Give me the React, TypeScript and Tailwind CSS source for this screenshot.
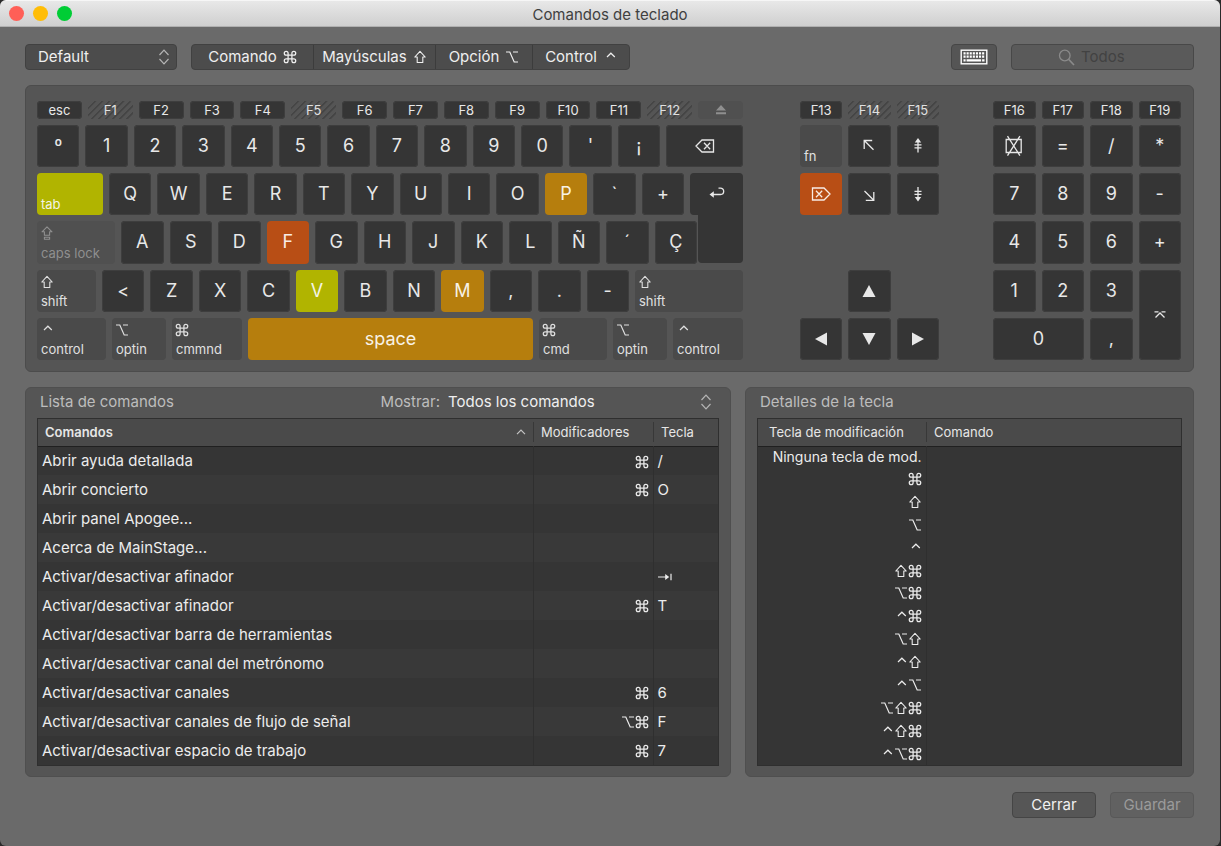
import { useState } from 'react'
import type { ReactNode } from 'react'
import clsx from 'clsx'

type Tone = 'dark' | 'modifier' | 'disabled' | 'yellow' | 'amber' | 'orange' | 'hatched'

const tones: Record<Tone, string> = {
  dark: 'bg-[#353535] text-[#e8e8e8] ring-1 ring-inset ring-[#3e3e3e]',
  modifier: 'bg-[#4a4a4a] text-[#e0e0e0]',
  disabled: 'bg-[#505050] text-[#8f8f8f]',
  yellow: 'bg-[#b1b400] text-[#f4f4e6]',
  amber: 'bg-[#b67e0d] text-[#f8f2e6]',
  orange: 'bg-[#b84e15] text-[#f8ece6]',
  hatched:
    'bg-[repeating-linear-gradient(-45deg,#555555_0px,#555555_3px,#454545_4px,#454545_5px)] text-[#e0e0e0]',
}

/* ---------- symbols ---------- */

type Mod = 'cmd' | 'shift' | 'opt' | 'ctrl' | 'caps'

const modNames: Record<Mod, string> = {
  cmd: 'Comando',
  shift: 'Mayúsculas',
  opt: 'Opción',
  ctrl: 'Control',
  caps: 'Bloqueo de mayúsculas',
}

function ModIcon({ mod }: { mod: Mod }) {
  const common = {
    width: 14,
    height: 14,
    fill: 'none',
    stroke: 'currentColor',
    role: 'img',
    'aria-label': modNames[mod],
    className: 'shrink-0',
  }
  if (mod === 'cmd')
    return (
      <svg viewBox="1 1 22 22" strokeWidth="2" {...common}>
        <path d="M15 6v12a3 3 0 1 0 3-3H6a3 3 0 1 0 3 3V6a3 3 0 1 0-3 3h12a3 3 0 1 0-3-3" />
      </svg>
    )
  if (mod === 'shift')
    return (
      <svg viewBox="0 0 14 14" strokeWidth="1.1" strokeLinejoin="round" {...common}>
        <path d="M7 1.3 12.2 7H9.8v5.5H4.2V7H1.8Z" />
      </svg>
    )
  if (mod === 'caps')
    return (
      <svg viewBox="0 0 14 14" strokeWidth="1.1" strokeLinejoin="round" {...common}>
        <path d="M7 .8 12 5.8H9.6v3.5H4.4V5.8H2ZM4.4 11.2h5.2v2H4.4Z" />
      </svg>
    )
  if (mod === 'opt')
    return (
      <svg viewBox="0 0 14 14" strokeWidth="1.2" {...common}>
        <path d="M1 2h3.8l4.4 10H13M8 2h5" />
      </svg>
    )
  return (
    <svg viewBox="0 0 14 14" strokeWidth="1.2" {...common}>
      <path d="M4 7 7.9 3.2 11.8 7" />
    </svg>
  )
}

function Mods({ keys }: { keys: Mod[] }) {
  return (
    <span className="inline-flex items-center align-middle">
      {keys.map((k) => (
        <ModIcon key={k} mod={k} />
      ))}
    </span>
  )
}

function UpDown() {
  return (
    <svg
      width="12"
      height="16"
      viewBox="0 0 12 16"
      fill="none"
      stroke="#b4b4b4"
      strokeWidth="1.2"
      className="pointer-events-none absolute top-1/2 right-[7px] -translate-y-1/2"
      aria-hidden="true"
    >
      <path d="M1.5 6 6 1.2 10.5 6M1.5 10 6 14.8 10.5 10" />
    </svg>
  )
}

function Glyph({ d, w = 20, h = 20, fill = false }: { d: string; w?: number; h?: number; fill?: boolean }) {
  return (
    <svg
      width={w}
      height={h}
      viewBox={`0 0 ${w} ${h}`}
      fill={fill ? 'currentColor' : 'none'}
      stroke={fill ? 'none' : 'currentColor'}
      strokeWidth="1.3"
      aria-hidden="true"
    >
      <path d={d} />
    </svg>
  )
}

const backspace = <Glyph d="M7 4h11.5v12H7L1 10ZM9 6.8l6.2 6.4M15.2 6.8 9 13.2" />
const forwardDelete = <Glyph d="M1.5 4H13l6 6-6 6H1.5ZM5 6.8l6.2 6.4M11.2 6.8 5 13.2" />
const home = <Glyph d="M5.2 13V4.5h8M5.5 4.8l9 9" />
const end = <Glyph d="M14.8 8v8.3h-8M14.5 16l-9-9" />
const pageUp = (
  <svg width="20" height="20" viewBox="0 0 20 20" stroke="currentColor" strokeWidth="1.3" fill="currentColor" aria-hidden="true">
    <path d="M10 6v10.5M6.5 8.8h7M6.5 11.8h7" fill="none" />
    <path d="M10 2 13.2 6.4H6.8Z" stroke="none" />
  </svg>
)
const pageDown = (
  <svg width="20" height="20" viewBox="0 0 20 20" stroke="currentColor" strokeWidth="1.3" fill="currentColor" aria-hidden="true">
    <path d="M10 3v10.5M6.5 7.4h7M6.5 10.4h7" fill="none" />
    <path d="M10 17.4 13.2 13H6.8Z" stroke="none" />
  </svg>
)
const clear = <Glyph h={22} d="M2.2 4.5h15v13h-15ZM3.5 1.2l12.4 19.4M15.9 1.2 3.5 20.6" />
const numEnter = <Glyph d="M4.5 6.8h4M11.5 6.8h4M5.5 12.5 10 8l4.5 4.5" />
const eject = <Glyph fill w={12} h={10} d="M6 0 11 5.5H1ZM1 7.200h10v2H1Z" />
const returnArrow = (
  <svg width="20" height="20" viewBox="0 0 20 20" fill="none" stroke="currentColor" strokeWidth="1.3" aria-hidden="true">
    <path d="M4 10.500h9.500a3.200 3.200 0 0 0 0-6.400H11.500" />
    <path d="M2.500 10.500 6.800 7.300v6.400Z" fill="currentColor" stroke="none" />
  </svg>
)
const arrowUp = <Glyph fill w={14} h={14} d="M7 1 13.500 13H.5Z" />
const arrowDown = <Glyph fill w={14} h={14} d="M7 13 .5 1h13Z" />
const arrowLeft = <Glyph fill w={14} h={14} d="M1 7 13 .5v13Z" />
const arrowRight = <Glyph fill w={14} h={14} d="M13 7 1 .5v13Z" />
const tabArrow = (
  <svg width="14" height="8" viewBox="0 0 14 8" fill="none" stroke="currentColor" strokeWidth="1.2" role="img" aria-label="Tabulador">
    <path d="M0 4h8M13 .8v6.400" />
    <path d="M11.200 4 7.200 1v6Z" fill="currentColor" stroke="none" />
  </svg>
)

/* ---------- keys ---------- */

function Key({
  children,
  tone = 'dark',
  size = 'flex-1',
  label,
}: {
  children: ReactNode
  tone?: Tone
  size?: string
  label?: string
}) {
  return (
    <button
      type="button"
      aria-label={label}
      className={clsx('flex min-w-0 items-center justify-center rounded-[4px] text-[18px] leading-none', size, tones[tone])}
    >
      {children}
    </button>
  )
}

function FKey({ name }: { name: string }) {
  const hatched = ['F1', 'F5', 'F12', 'F14', 'F15'].includes(name)
  return (
    <button
      type="button"
      aria-label={name === 'eject' ? 'Expulsar' : undefined}
      className={clsx(
        'flex min-w-0 flex-1 items-center justify-center rounded-[4px] text-[13px] leading-none',
        tones[name === 'eject' ? 'disabled' : hatched ? 'hatched' : 'dark'],
      )}
    >
      {name === 'eject' ? eject : name}
    </button>
  )
}

function ModKey({ text, mod, size, tone = 'modifier' }: { text: string; mod?: Mod; size: string; tone?: Tone }) {
  return (
    <button
      type="button"
      className={clsx(
        'flex min-w-0 flex-col items-start justify-between rounded-[4px] px-[3px] pt-[5px] pb-[3px] text-[13px] leading-4',
        size,
        tones[tone],
      )}
    >
      {mod ? <ModIcon mod={mod} /> : <span />}
      <span className="pl-px">{text}</span>
    </button>
  )
}

const keyTones: Record<string, Tone> = { P: 'amber', F: 'orange', V: 'yellow', M: 'amber' }

function Letters({ keys }: { keys: string[] }) {
  return (
    <>
      {keys.map((k) => (
        <Key key={k} tone={keyTones[k] ?? 'dark'}>
          {k}
        </Key>
      ))}
    </>
  )
}

const rowClass = 'flex gap-[6px]'
const fRowClass = 'flex h-[18px] gap-[6px]'
const mainF = ['esc', 'F1', 'F2', 'F3', 'F4', 'F5', 'F6', 'F7', 'F8', 'F9', 'F10', 'F11', 'F12', 'eject']

function Keyboard() {
  return (
    <section
      aria-label="Teclado"
      className="mt-[15px] flex rounded-[6px] border border-[#4c4c4c] bg-[#555555] pt-[15px] pr-3 pb-[11px] pl-[11px]"
    >
      <div className="flex min-w-0 flex-[706_1_0%] flex-col gap-[6px]">
        <div className={fRowClass}>
          {mainF.map((f) => (
            <FKey key={f} name={f} />
          ))}
        </div>
        <div className="grid h-[235px] grid-rows-5 gap-[6px]">
          <div className={rowClass}>
            <Letters keys={['º', '1', '2', '3', '4', '5', '6', '7', '8', '9', '0', "'", '¡']} />
            <Key size="w-[77px]" label="Retroceso">
              {backspace}
            </Key>
          </div>
          <div className={rowClass}>
            <ModKey text="tab" tone="yellow" size="w-[66px]" />
            <Letters keys={['Q', 'W', 'E', 'R', 'T', 'Y', 'U', 'I', 'O', 'P', '`', '+']} />
            <button
              type="button"
              aria-label="Retorno"
              className="relative flex w-[53px] items-center justify-center rounded-[4px] rounded-br-none bg-[#353535] text-[#e8e8e8]"
            >
              {returnArrow}
              <span className="absolute top-full right-0 h-[48px] w-[45px] rounded-b-[4px] bg-[#353535]" />
            </button>
          </div>
          <div className={rowClass}>
            <ModKey text="caps lock" mod="caps" tone="disabled" size="w-[78px]" />
            <Letters keys={['A', 'S', 'D', 'F', 'G', 'H', 'J', 'K', 'L', 'Ñ', '´', 'Ç']} />
            <span className="w-[40px]" />
          </div>
          <div className={rowClass}>
            <ModKey text="shift" mod="shift" size="w-[59px]" />
            <Letters keys={['<', 'Z', 'X', 'C', 'V', 'B', 'N', 'M', ',', '.', '-']} />
            <ModKey text="shift" mod="shift" size="w-[108px]" />
          </div>
          <div className={rowClass}>
            <ModKey text="control" mod="ctrl" size="w-[69px]" />
            <ModKey text="optin" mod="opt" size="w-[54px]" />
            <ModKey text="cmmnd" mod="cmd" size="w-[70px]" />
            <Key tone="amber">space</Key>
            <ModKey text="cmd" mod="cmd" size="w-[68px]" />
            <ModKey text="optin" mod="opt" size="w-[54px]" />
            <ModKey text="control" mod="ctrl" size="w-[70px]" />
          </div>
        </div>
      </div>

      <div className="ml-[57px] flex min-w-0 flex-[139_1_0%] flex-col gap-[6px]">
        <div className={fRowClass}>
          {['F13', 'F14', 'F15'].map((f) => (
            <FKey key={f} name={f} />
          ))}
        </div>
        <div className="grid h-[235px] grid-cols-3 grid-rows-5 gap-[6px]">
          <ModKey text="fn" size="" />
          <Key size="" label="Inicio">{home}</Key>
          <Key size="" label="Página arriba">{pageUp}</Key>
          <Key size="" tone="orange" label="Suprimir">{forwardDelete}</Key>
          <Key size="" label="Fin">{end}</Key>
          <Key size="" label="Página abajo">{pageDown}</Key>
          <Key size="col-start-2 row-start-4" label="Flecha arriba">{arrowUp}</Key>
          <Key size="col-start-1 row-start-5" label="Flecha izquierda">{arrowLeft}</Key>
          <Key size="col-start-2 row-start-5" label="Flecha abajo">{arrowDown}</Key>
          <Key size="col-start-3 row-start-5" label="Flecha derecha">{arrowRight}</Key>
        </div>
      </div>

      <div className="ml-[54px] flex min-w-0 flex-[188_1_0%] flex-col gap-[6px]">
        <div className={fRowClass}>
          {['F16', 'F17', 'F18', 'F19'].map((f) => (
            <FKey key={f} name={f} />
          ))}
        </div>
        <div className="grid h-[235px] grid-cols-4 grid-rows-5 gap-[6px]">
          <Key size="" label="Borrar">{clear}</Key>
          {['=', '/', '*', '7', '8', '9', '-', '4', '5', '6', '+', '1', '2', '3'].map((k) => (
            <Key key={k} size="">
              {k}
            </Key>
          ))}
          <Key size="row-span-2" label="Intro">{numEnter}</Key>
          <Key size="col-span-2">0</Key>
          <Key size="">,</Key>
        </div>
      </div>
    </section>
  )
}

/* ---------- tables ---------- */

const commands: { name: string; mods: Mod[]; key: ReactNode }[] = [
  { name: 'Abrir ayuda detallada', mods: ['cmd'], key: '/' },
  { name: 'Abrir concierto', mods: ['cmd'], key: 'O' },
  { name: 'Abrir panel Apogee...', mods: [], key: '' },
  { name: 'Acerca de MainStage...', mods: [], key: '' },
  { name: 'Activar/desactivar afinador', mods: [], key: tabArrow },
  { name: 'Activar/desactivar afinador', mods: ['cmd'], key: 'T' },
  { name: 'Activar/desactivar barra de herramientas', mods: [], key: '' },
  { name: 'Activar/desactivar canal del metrónomo', mods: [], key: '' },
  { name: 'Activar/desactivar canales', mods: ['cmd'], key: '6' },
  { name: 'Activar/desactivar canales de flujo de señal', mods: ['opt', 'cmd'], key: 'F' },
  { name: 'Activar/desactivar espacio de trabajo', mods: ['cmd'], key: '7' },
]

const details: Mod[][] = [
  ['cmd'],
  ['shift'],
  ['opt'],
  ['ctrl'],
  ['shift', 'cmd'],
  ['opt', 'cmd'],
  ['ctrl', 'cmd'],
  ['opt', 'shift'],
  ['ctrl', 'shift'],
  ['ctrl', 'opt'],
  ['opt', 'shift', 'cmd'],
  ['ctrl', 'shift', 'cmd'],
  ['ctrl', 'opt', 'cmd'],
]

const panelClass = 'flex min-w-0 flex-col rounded-[6px] border border-[#4f4f4f] bg-[#555555] px-[11px] pb-[10px]'
const panelHead = 'flex h-[30px] items-center pb-[2px] text-[15px] text-[#bdbdbd]'
const frameClass = 'border border-[#2f2f2f] bg-[#353535]'
const headText = 'text-left text-[13px] leading-4 font-normal text-[#e6e6e6]'
const headCell = 'my-[3px] flex h-5 items-center border-l border-[#383838] pb-px pl-[7px]'

function CommandList() {
  return (
    <section aria-label="Lista de comandos" className={clsx(panelClass, 'flex-[682_1_0%]')}>
      <div className={panelHead}>
        <h2 className="pl-[3px]">Lista de comandos</h2>
        <label htmlFor="filter" className="ml-auto">
          Mostrar:
        </label>
        <div className="relative w-[279px]">
          <select id="filter" className="w-full appearance-none bg-transparent pl-2 text-[#efefef] outline-none">
            <option>Todos los comandos</option>
          </select>
          <UpDown />
        </div>
      </div>
      <div className={frameClass}>
        <table className="w-full table-fixed border-collapse">
          <colgroup>
            <col />
            <col className="w-[120px]" />
            <col className="w-[65px]" />
          </colgroup>
          <thead>
            <tr className="h-[27px] border-b border-[#202020] bg-[#4a4a4a]">
              <th scope="col" aria-sort="ascending" className={clsx(headText, 'p-0')}>
                <div className="flex items-center justify-between px-[7px] pb-px font-semibold">
                  Comandos
                  <svg width="10" height="6" viewBox="0 0 10 6" fill="none" stroke="#c4c4c4" strokeWidth="1.2" aria-hidden="true">
                    <path d="M1 5.2 5 1.2 9 5.2" />
                  </svg>
                </div>
              </th>
              <th scope="col" className={clsx(headText, 'p-0')}>
                <div className={headCell}>Modificadores</div>
              </th>
              <th scope="col" className={clsx(headText, 'p-0')}>
                <div className={headCell}>Tecla</div>
              </th>
            </tr>
          </thead>
          <tbody className="text-[15px] leading-5 text-[#ececec]">
            {commands.map((c, i) => (
              <tr key={i} className="h-[29px] even:bg-[#393939]">
                <td className="truncate pt-px pr-2 pb-0 pl-1">{c.name}</td>
                <td className="border-l border-[#2f2f2f] py-0 pr-1 text-right">
                  <Mods keys={c.mods} />
                </td>
                <td className="border-l border-[#2f2f2f] pt-px pb-0 pl-1">{c.key}</td>
              </tr>
            ))}
          </tbody>
        </table>
      </div>
    </section>
  )
}

function KeyDetails() {
  return (
    <section aria-label="Detalles de la tecla" className={clsx(panelClass, 'flex-[425_1_0%]')}>
      <div className={panelHead}>
        <h2 className="pl-[3px]">Detalles de la tecla</h2>
      </div>
      <div className={clsx(frameClass, 'flex-1')}>
        <table className="h-full w-full table-fixed border-collapse">
          <colgroup>
            <col className="w-[168px]" />
            <col />
          </colgroup>
          <thead>
            <tr className="h-[27px] border-b border-[#202020] bg-[#4a4a4a]">
              <th scope="col" className={clsx(headText, 'pt-0 pr-0 pb-px pl-[11px]')}>
                Tecla de modificación
              </th>
              <th scope="col" className={clsx(headText, 'p-0')}>
                <div className={headCell}>Comando</div>
              </th>
            </tr>
          </thead>
          <tbody className="text-[14px] leading-5 text-[#ececec]">
            <tr>
              <td className="py-0 pr-1 text-right whitespace-nowrap">Ninguna tecla de mod.</td>
              <td className="border-l border-[#2f2f2f]" />
            </tr>
            {details.map((mods) => (
              <tr key={mods.join()}>
                <td className="pt-0 pr-1 pb-[2px] text-right">
                  <Mods keys={mods} />
                </td>
                <td className="border-l border-[#2f2f2f]" />
              </tr>
            ))}
          </tbody>
        </table>
      </div>
    </section>
  )
}

/* ---------- toolbar ---------- */

const modifierButtons: { text: string; mod: Mod; width: string }[] = [
  { text: 'Comando', mod: 'cmd', width: 'w-[121px]' },
  { text: 'Mayúsculas', mod: 'shift', width: 'w-[122px]' },
  { text: 'Opción', mod: 'opt', width: 'w-[97px]' },
  { text: 'Control', mod: 'ctrl', width: 'w-[97px]' },
]

function Toolbar() {
  const [query, setQuery] = useState('')
  return (
    <div className="flex h-[26px] text-[15px] text-[#efefef]">
      <div className="relative w-[152px]">
        <select
          aria-label="Conjunto de comandos"
          className="h-full w-full appearance-none rounded-[4px] border border-[#414141] bg-[#4c4c4c] pl-3 outline-none"
        >
          <option>Default</option>
        </select>
        <UpDown />
      </div>
      <div role="group" className="ml-[14px] flex overflow-hidden rounded-[4px] border border-[#414141] bg-[#4c4c4c]">
        {modifierButtons.map((b, i) => (
          <button
            key={b.text}
            type="button"
            className={clsx('flex items-center justify-center gap-[6px]', b.width, i > 0 && 'border-l border-[#3c3c3c]')}
          >
            {b.text}
            <ModIcon mod={b.mod} />
          </button>
        ))}
      </div>
      <button
        type="button"
        aria-label="Mostrar teclado"
        className="ml-auto flex w-[46px] items-center justify-center rounded-[4px] border border-[#464646] bg-[#555555]"
      >
        <svg width="28" height="16" viewBox="0 0 28 16" aria-hidden="true">
          <rect x="1.200" y="1.200" width="25.600" height="13.600" fill="none" stroke="#fff" strokeWidth="1.400" />
          <path
            d="M3.500 4.300h21M3.500 7.700h21"
            stroke="#fff"
            strokeWidth="2.300"
            strokeDasharray="2.100 1"
            fill="none"
          />
          <path d="M3.500 11.400h2.100M6.600 11.400h14.500M22.100 11.400h2.400" stroke="#fff" strokeWidth="2.300" fill="none" />
        </svg>
      </button>
      <label className="ml-[14px] flex w-[183px] items-center rounded-[4px] border border-[#484848] bg-[#5a5a5a] pl-[46px]">
        <svg width="17" height="17" viewBox="0 0 17 17" fill="none" stroke="#8a8a8a" strokeWidth="1.3" aria-hidden="true" className="shrink-0">
          <circle cx="6.8" cy="6.5" r="5.3" />
          <path d="m10.8 10.5 5.2 5.5" strokeWidth="1.7" />
        </svg>
        <input
          type="text"
          aria-label="Buscar"
          placeholder="Todos"
          value={query}
          onChange={(e) => setQuery(e.target.value)}
          className="ml-[6px] w-full min-w-0 bg-transparent placeholder:text-[#424242] outline-none"
        />
      </label>
    </div>
  )
}

export default function App() {
  return (
    <div className="min-h-screen bg-[#2a2a2a] pr-px font-['Inter','Noto_Sans',sans-serif]">
      <main className="flex min-h-screen flex-col overflow-hidden rounded-[6px] bg-[#6a6a6a]">
        <header className="relative flex h-[27px] items-center justify-center border-t border-b border-t-[#f6f6f6] border-b-[#b0b0b0] bg-linear-to-b from-[#e8e8e8] to-[#cfcfcf] pt-[3px]">
          <div className="absolute top-[5px] left-[9px] flex gap-[9px]">
            <button type="button" aria-label="Cerrar ventana" className="size-[15px] rounded-full bg-[#ff5f57]" />
            <button type="button" aria-label="Minimizar" className="size-[15px] rounded-full bg-[#ffbd06]" />
            <button type="button" aria-label="Ampliar" className="size-[15px] rounded-full bg-[#00cd35]" />
          </div>
          <h1 className="text-[15px] text-[#404040]">Comandos de teclado</h1>
        </header>
        <div className="pt-[17px] pr-[26px] pb-7 pl-[25px]">
          <Toolbar />
          <Keyboard />
          <div className="mt-[15px] flex gap-[14px]">
            <CommandList />
            <KeyDetails />
          </div>
          <div className="mt-[15px] flex justify-end gap-[14px] text-[15px]">
            <button type="button" className="h-[26px] w-[84px] rounded-[4px] border border-[#454545] bg-[#565656] text-[#f0f0f0]">
              Cerrar
            </button>
            <button
              type="button"
              disabled
              className="h-[26px] w-[84px] rounded-[4px] border border-[#585858] bg-[#616161] text-[#9b9b9b]"
            >
              Guardar
            </button>
          </div>
        </div>
      </main>
    </div>
  )
}
